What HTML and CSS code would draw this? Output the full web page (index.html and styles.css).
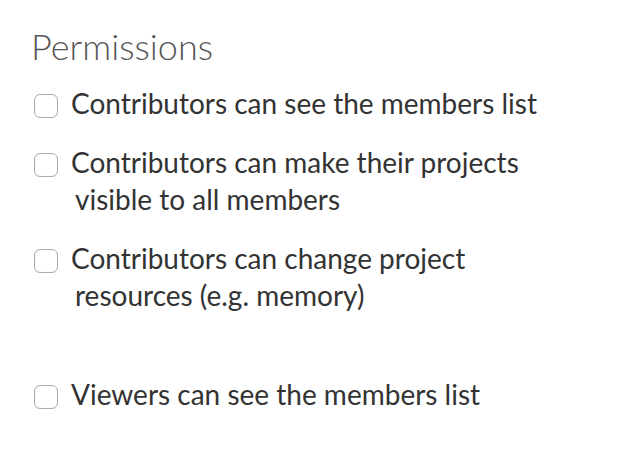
FILE: index.html
```html
<!DOCTYPE html>
<html>
<head>
<meta charset="utf-8">
<link rel="stylesheet" href="styles.css">
</head>
<body>
<div class="panel">
  <h2 class="title">Permissions</h2>
  <div class="group">
    <label class="option"><span class="box"></span><span class="text">Contributors can see the members list</span></label>
    <label class="option"><span class="box"></span><span class="text">Contributors can make their projects visible to all members</span></label>
    <label class="option"><span class="box"></span><span class="text">Contributors can change project resources (e.g. memory)</span></label>
  </div>
  <div class="group group-last">
    <label class="option"><span class="box"></span><span class="text">Viewers can see the members list</span></label>
  </div>
</div>
</body>
</html>
```
FILE: styles.css
```css
html, body {
  margin: 0;
  padding: 0;
  background: #ffffff;
}
body {
  font-family: Lato, "Open Sans", sans-serif;
  color: #333333;
}
.panel {
  padding: 24px 34px 0 34px;
  width: 540px;
}
.title {
  margin: 0 0 0 -3px;
  font-weight: 300;
  font-size: 36px;
  line-height: 44px;
  color: #555555;
}
.group {
  display: flex;
  flex-direction: column;
  gap: 22px;
  margin-top: 17px;
}
.group-last {
  margin-top: 62px;
}
.option {
  display: flex;
  align-items: flex-start;
  font-size: 28px;
  line-height: 37px;
}
.box {
  flex: none;
  width: 22px;
  height: 22px;
  border: 1px solid #acacac;
  border-radius: 6px;
  margin-top: 9px;
  margin-right: 13px;
  box-shadow: inset 0 0 1px rgba(0,0,0,0.15);
}
.text {
  padding-left: 4px;
  text-indent: -4px;
  max-width: 480px;
}
```
